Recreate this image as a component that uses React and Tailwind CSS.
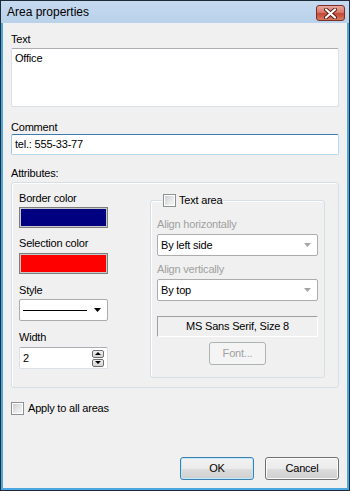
import React from 'react';

const Check = () => (
  <div className="w-[13px] h-[13px] shrink-0 border border-[#8e8f8f] bg-white p-[1px]">
    <div className="w-full h-full bg-[linear-gradient(135deg,#cbcfd5_0%,#e8e9ea_60%,#f6f6f6_100%)]" />
  </div>
);

const Arrow = ({ disabled }) => (
  <svg width="7" height="4" viewBox="0 0 7 4" className="shrink-0">
    <path d="M0 0h7L3.5 4z" fill={disabled ? '#a5a5a5' : '#000'} />
  </svg>
);

const Combo = ({ children, disabled, className = '' }) => (
  <div className={`flex items-center justify-between h-[22px] bg-white border border-[#acacac] rounded-[2px] pl-[3px] pr-[6px] ${className}`}>
    <div className="flex-1 flex items-center">{children}</div>
    <Arrow disabled={disabled} />
  </div>
);

const SpinBtn = ({ up }) => (
  <div className="w-[12px] h-[8px] border border-[#707070] rounded-[2px] bg-[linear-gradient(to_bottom,#f2f2f2,#d2d2d2)] flex items-center justify-center">
    <svg width="6" height="3" viewBox="0 0 6 3">
      <path d={up ? 'M0 3h6L3 0z' : 'M0 0h6L3 3z'} fill="#000" />
    </svg>
  </div>
);

const Button = ({ children, primary, disabled, className = '' }) => (
  <div
    className={`flex items-center justify-center rounded-[3px] border ${
      primary
        ? 'border-[#3c7fb1] shadow-[inset_0_0_0_1px_#bfeafd]'
        : disabled
        ? 'border-[#adb2b5]'
        : 'border-[#707070] shadow-[inset_0_0_0_1px_#fcfcfc]'
    } ${
      disabled
        ? 'bg-[#f4f4f4] text-[#a0a0a0]'
        : 'bg-[linear-gradient(to_bottom,#f2f2f2_0%,#ebebeb_50%,#dddddd_50%,#cfcfcf_100%)] text-black'
    } ${className}`}
  >
    {children}
  </div>
);

export default function App() {
  return (
    <div className="w-[350px] h-[491px] bg-[#1d2b38] p-[1px] font-['Liberation_Sans',Arial,sans-serif] text-[11px] leading-[13px] tracking-[-0.2px] text-black">
      <div className="flex flex-col h-full bg-[#4ba7e0]">
        {/* Title bar */}
        <div className="h-[22px] flex items-center justify-between pl-[6px] pr-[4px] bg-[linear-gradient(to_bottom,#c6daf0,#b9d1ea)]">
          <span className="text-[12px] leading-[14px] tracking-normal text-black">Area properties</span>
          <div className="w-[29px] h-[16px] mt-[2px] rounded-[3px] border border-[#7a2e25] bg-[linear-gradient(to_bottom,#e8a79c_0%,#d8786a_45%,#c44836_55%,#d67a5f_100%)] flex items-center justify-center">
            <svg width="13" height="11" viewBox="0 0 13 11">
              <path d="M2 1.5L11 9.5M11 1.5L2 9.5" stroke="#5a1a12" strokeWidth="4" strokeLinecap="round" />
              <path d="M2 1.5L11 9.5M11 1.5L2 9.5" stroke="#fff" strokeWidth="2.2" strokeLinecap="round" />
            </svg>
          </div>
        </div>

        {/* Client area */}
        <div className="flex-1 flex flex-col mx-[2px] mb-[2px] bg-[#f0f0f0] px-[8px] pt-[10px] pb-[8px]">
          <div className="mb-[2px]">Text</div>
          <div className="h-[59px] bg-white border border-[#dbdfe6] border-t-[#abadb3] rounded-[2px] px-[3px] pt-[3px]">
            Office
          </div>

          <div className="mt-[14px]">Comment</div>
          <div className="h-[21px] flex items-center bg-white border border-[#b7d9ed] border-t-[#3d7bad] border-l-[#a4c9e3] rounded-[2px] px-[3px]">
            tel.: 555-33-77
          </div>

          <div className="mt-[12px] mb-[2px]">Attributes:</div>
          <div className="h-[206px] flex border border-[#d5dfe5] rounded-[3px] shadow-[inset_1px_1px_0_#fff] pl-[7px] pr-[13px] pt-[9px]">
            {/* Left column */}
            <div className="w-[89px] flex flex-col">
              <div className="mb-[2px]">Border color</div>
              <div className="h-[21px] border border-[#7d7d7d] bg-[#000080] shadow-[inset_0_0_0_1px_#c8c8c8]" />
              <div className="mt-[9px] mb-[3px]">Selection color</div>
              <div className="h-[21px] border border-[#7d7d7d] bg-[#ff0000] shadow-[inset_0_0_0_1px_#c8c8c8]" />
              <div className="mt-[10px] mb-[2px]">Style</div>
              <Combo>
                <div className="w-[64px] h-[1px] bg-black" />
              </Combo>
              <div className="mt-[10px] mb-[3px]">Width</div>
              <div className="h-[22px] flex items-center justify-between bg-white border border-[#dbdfe6] border-t-[#abadb3] rounded-[2px] px-[3px]">
                <span>2</span>
                <div className="flex flex-col gap-[1px]">
                  <SpinBtn up />
                  <SpinBtn />
                </div>
              </div>
            </div>

            {/* Text area group */}
            <div className="ml-[42px] mt-[8px] mb-[9px] flex-1 flex flex-col border border-[#d5dfe5] rounded-[3px] shadow-[inset_1px_1px_0_#fff] px-[6px]">
              <div className="-mt-[7px] ml-[5px] w-fit flex items-center gap-[3px] bg-[#f0f0f0] px-[1px]">
                <Check />
                <span>Text area</span>
              </div>
              <div className="mt-[11px] mb-[3px] text-[#a0a0a0]">Align horizontally</div>
              <Combo disabled>By left side</Combo>
              <div className="mt-[7px] mb-[3px] text-[#a0a0a0]">Align vertically</div>
              <Combo disabled>By top</Combo>
              <div className="mt-[15px] h-[21px] flex items-center justify-center border border-[#a0a0a0] border-r-white border-b-white">
                MS Sans Serif, Size 8
              </div>
              <Button disabled className="mt-[5px] self-center w-[57px] h-[23px]">Font...</Button>
            </div>
          </div>

          <div className="mt-[14px] flex items-center gap-[4px]">
            <Check />
            <span>Apply to all areas</span>
          </div>

          <div className="mt-auto flex justify-end gap-[11px]">
            <Button primary className="w-[74px] h-[23px]">OK</Button>
            <Button className="w-[74px] h-[23px]">Cancel</Button>
          </div>
        </div>
      </div>
    </div>
  );
}
